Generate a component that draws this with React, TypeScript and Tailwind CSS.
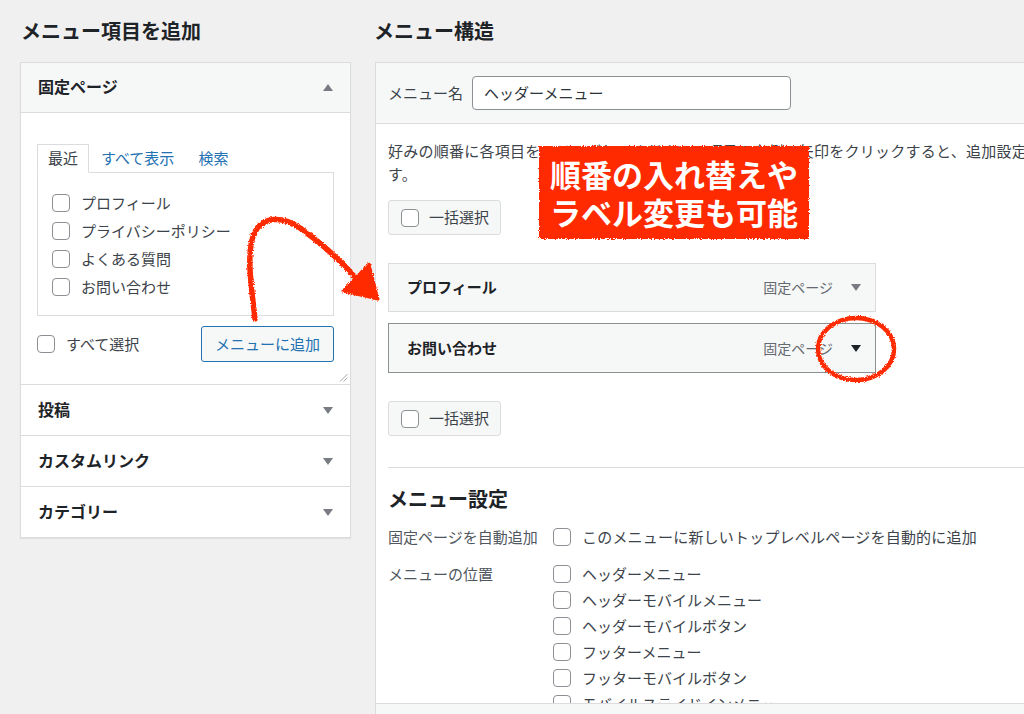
import React from "react";

const Box = () => (
  <span className="inline-block w-[18px] h-[18px] shrink-0 rounded-[4px] border border-[#8c8f94] bg-white" />
);

const TriDown = ({ color = "#787c82" }: { color?: string }) => (
  <svg width="10" height="7" viewBox="0 0 10 7" className="shrink-0">
    <polygon points="0,0 10,0 5,7" fill={color} />
  </svg>
);

const TriUp = ({ color = "#787c82" }: { color?: string }) => (
  <svg width="10" height="7" viewBox="0 0 10 7" className="shrink-0">
    <polygon points="0,7 10,7 5,0" fill={color} />
  </svg>
);

const pageItems = ["プロフィール", "プライバシーポリシー", "よくある質問", "お問い合わせ"];
const locations = [
  "ヘッダーメニュー",
  "ヘッダーモバイルメニュー",
  "ヘッダーモバイルボタン",
  "フッターメニュー",
  "フッターモバイルボタン",
  "モバイルスライドインメニュー",
];

export default function App() {
  return (
    <div className="relative w-[1024px] h-[714px] overflow-hidden bg-[#f0f0f1] text-[#3c434a] font-['Noto_Sans_CJK_JP','Noto_Sans',sans-serif]">
      <svg width="0" height="0" className="absolute">
        <defs>
          <filter id="rough" x="-10%" y="-10%" width="120%" height="120%">
            <feTurbulence type="fractalNoise" baseFrequency="0.9" numOctaves="2" seed="3" result="n" />
            <feDisplacementMap in="SourceGraphic" in2="n" scale="3.5" xChannelSelector="R" yChannelSelector="G" />
          </filter>
        </defs>
      </svg>

      <div className="flex gap-[24px] pl-[20px] pt-[18px]">
        {/* Left column */}
        <div className="w-[331px] shrink-0">
          <h2 className="h-[26px] leading-[26px] text-[20px] font-bold text-[#1d2327] pl-[1px] whitespace-nowrap">
            メニュー項目を追加
          </h2>
          <div className="mt-[18px] border border-[#dcdcde] bg-white shadow-[0_1px_1px_rgba(0,0,0,0.06)]">
            <div className="h-[50px] border-b border-[#dcdcde] bg-[#f6f7f7] flex items-center justify-between pl-[17px] pr-[17px]">
              <span className="text-[16px] leading-[20px] font-bold text-[#1d2327] -mt-[3px]">固定ページ</span>
              <TriUp />
            </div>
            <div className="relative pt-[31px] px-4 pb-[22px]">
              <div className="flex gap-[2px] items-end text-[15px]">
                <div className="relative z-10 -mb-px h-[29px] px-[10px] border border-[#dcdcde] border-b-white bg-white flex items-center text-[#3c434a]">
                  最近
                </div>
                <div className="h-[28px] px-[10px] flex items-center text-[#2271b1]">すべて表示</div>
                <div className="h-[28px] px-[12px] flex items-center text-[#2271b1]">検索</div>
              </div>
              <div className="border border-[#dcdcde] pt-[16px] pb-[14px] pl-[14px]">
                {pageItems.map((t) => (
                  <div key={t} className="h-[28px] flex items-center gap-[11px] text-[15px]">
                    <Box />
                    <span>{t}</span>
                  </div>
                ))}
              </div>
              <div className="mt-[10px] flex items-center justify-between">
                <div className="flex items-center gap-[11px] text-[15px]">
                  <Box />
                  <span>すべて選択</span>
                </div>
                <div className="w-[133px] h-[36px] border-[1.5px] border-[#2271b1] rounded-[3px] bg-[#f6f7f7] text-[#2271b1] text-[15px] flex items-center justify-center">
                  メニューに追加
                </div>
              </div>
              <svg width="9" height="9" viewBox="0 0 9 9" className="absolute right-[2px] bottom-[2px]">
                <line x1="1" y1="8.5" x2="8.5" y2="1" stroke="#8c8f94" strokeWidth="0.8" />
                <line x1="4.5" y1="8.5" x2="8.5" y2="4.5" stroke="#8c8f94" strokeWidth="0.8" />
              </svg>
            </div>
            {["投稿", "カスタムリンク", "カテゴリー"].map((t) => (
              <div
                key={t}
                className="h-[51px] border-t border-[#dcdcde] flex items-center justify-between pl-[17px] pr-[17px]"
              >
                <span className="text-[16px] leading-[20px] font-bold text-[#1d2327] -mt-[2px]">{t}</span>
                <TriDown />
              </div>
            ))}
          </div>
        </div>

        {/* Right column */}
        <div className="w-[720px] shrink-0">
          <h2 className="h-[26px] leading-[26px] text-[20px] font-bold text-[#1d2327] whitespace-nowrap -ml-[1px]">
            メニュー構造
          </h2>
          <div className="mt-[18px] border border-[#dcdcde] bg-white">
            <div className="h-[61px] bg-[#f6f7f7] border-b border-[#dcdcde] flex items-center pl-[12px] gap-[9px]">
              <span className="text-[15px]">メニュー名</span>
              <div className="w-[319px] h-[34px] rounded-[4px] border border-[#8c8f94] bg-white pl-[11px] text-[15px] text-[#2c3338] flex items-center">
                ヘッダーメニュー
              </div>
            </div>
            <div className="h-[579px] overflow-hidden px-[12px] pt-[15px]">
              <p className="text-[15px] leading-[23px] tracking-[0.25px] whitespace-nowrap">
                好みの順番に各項目をドラッグしてください。項目の右側の矢印をクリックすると、追加設定を表示しま
                <br />
                す。
              </p>
              <div className="mt-[15px] w-[113px] h-[35px] border border-[#dcdcde] rounded-[3px] bg-[#f6f7f7] flex items-center pl-[12px] gap-[10px] text-[15px]">
                <Box />
                <span>一括選択</span>
              </div>
              <div className="mt-[28px] w-[488px] h-[49px] border border-[#dcdcde] bg-[#f6f7f7] flex items-center justify-between pl-[18px] pr-[14px]">
                <span className="text-[15px] font-bold text-[#1d2327]">プロフィール</span>
                <div className="flex items-center gap-[18px]">
                  <span className="text-[14px] text-[#646970]">固定ページ</span>
                  <TriDown />
                </div>
              </div>
              <div className="mt-[11px] w-[488px] h-[50px] border border-[#8c8f94] bg-[#f6f7f7] flex items-center justify-between pl-[18px] pr-[14px]">
                <span className="text-[15px] font-bold text-[#1d2327]">お問い合わせ</span>
                <div className="flex items-center gap-[18px]">
                  <span className="text-[14px] text-[#646970]">固定ページ</span>
                  <TriDown color="#1d2327" />
                </div>
              </div>
              <div className="mt-[28px] w-[113px] h-[35px] border border-[#dcdcde] rounded-[3px] bg-[#f6f7f7] flex items-center pl-[12px] gap-[10px] text-[15px]">
                <Box />
                <span>一括選択</span>
              </div>
              <div className="mt-[31px] border-t border-[#dcdcde]" />
              <h3 className="mt-[17px] h-[28px] leading-[28px] text-[20px] font-bold text-[#1d2327]">メニュー設定</h3>
              <div className="mt-[11px] flex h-[26px] items-center text-[15px]">
                <span className="w-[165px] shrink-0 text-[#50575e]">固定ページを自動追加</span>
                <div className="flex items-center gap-[11px]">
                  <Box />
                  <span className="tracking-[0.2px]">このメニューに新しいトップレベルページを自動的に追加</span>
                </div>
              </div>
              <div className="mt-[11px] flex text-[15px]">
                <div className="w-[165px] shrink-0 h-[26px] flex items-center text-[#50575e]">メニューの位置</div>
                <div className="flex flex-col">
                  {locations.map((t) => (
                    <div key={t} className="h-[26px] flex items-center gap-[11px]">
                      <Box />
                      <span>{t}</span>
                    </div>
                  ))}
                </div>
              </div>
            </div>
            <div className="h-[30px] bg-[#f6f7f7] border-t border-[#dcdcde]" />
          </div>
        </div>
      </div>

      {/* Annotation box */}
      <div className="absolute left-[538px] top-[145px] w-[272px] h-[95px]">
        <svg width="272" height="95" className="absolute inset-0 overflow-visible">
          <rect x="1" y="1" width="270" height="93" fill="#ff2b06" filter="url(#rough)" />
        </svg>
        <div className="relative flex flex-col items-center pt-[10px] text-[31px] leading-[38px] font-bold text-white whitespace-nowrap">
          <span>順番の入れ替えや</span>
          <span>ラベル変更も可能</span>
        </div>
      </div>

      {/* Arrow and circle annotations */}
      <svg width="1024" height="714" className="absolute left-0 top-0 pointer-events-none">
        <g filter="url(#rough)">
          <path
            d="M255 319 C 252 290, 245 250, 255 232 C 263 216, 283 216, 300 228 C 320 242, 338 258, 354 276"
            fill="none"
            stroke="#ff2b06"
            strokeWidth="5.5"
            strokeLinecap="round"
          />
          <polygon points="343,291 369,264 378,299" fill="#ff2b06" stroke="#ff2b06" strokeWidth="3" strokeLinejoin="round" />
          <ellipse cx="856" cy="349" rx="38" ry="31" fill="none" stroke="#ff2b06" strokeWidth="4.5" />
        </g>
      </svg>
    </div>
  );
}
